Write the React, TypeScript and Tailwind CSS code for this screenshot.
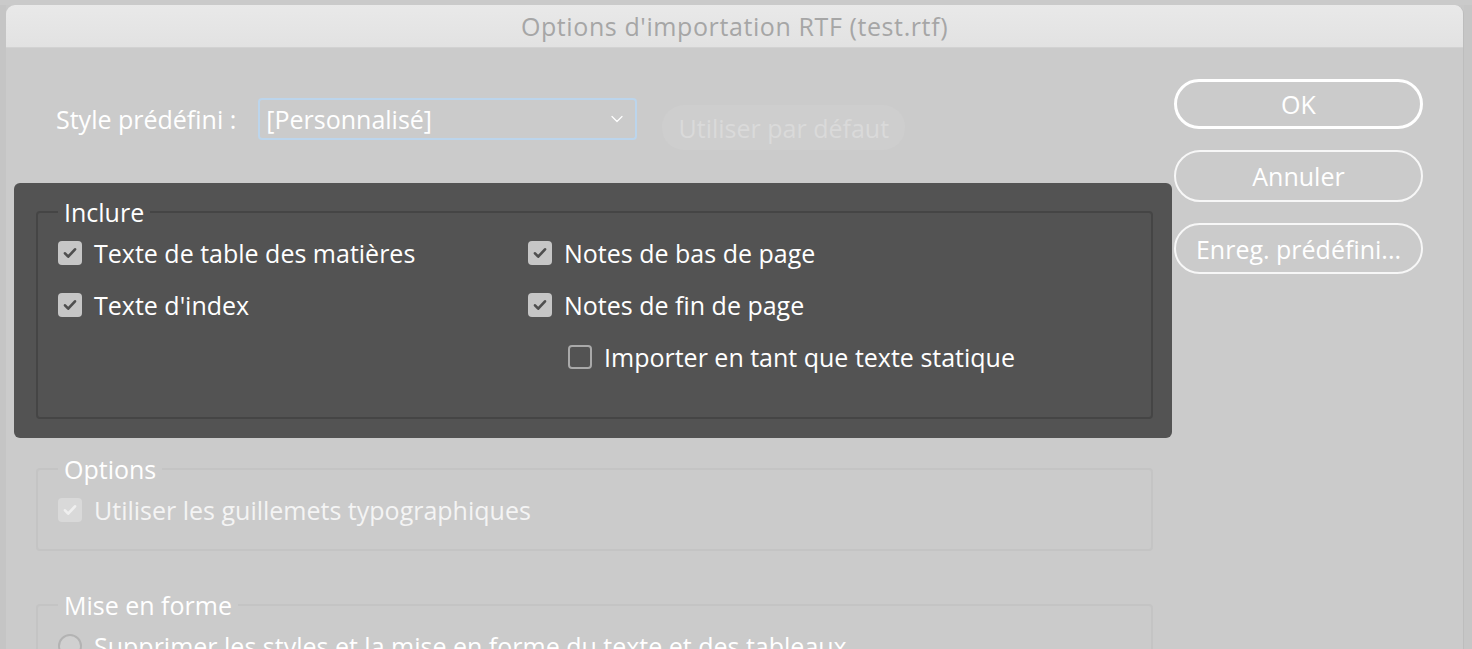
import { ChevronDown } from "lucide-react";

// Small check mark drawn for the mac-style checkboxes
function Tick({ color }: { color: string }) {
  return (
    <svg viewBox="0 0 24 24" className="w-[16px] h-[16px]">
      <path
        d="M4.5 12.5l4.8 5L19.5 6.5"
        fill="none"
        stroke={color}
        strokeWidth="4"
        strokeLinecap="round"
        strokeLinejoin="round"
      />
    </svg>
  );
}

function Check({
  label,
  checked = true,
  disabled = false,
}: {
  label: string;
  checked?: boolean;
  disabled?: boolean;
}) {
  return (
    <div className="flex items-center gap-[12px] h-[52px]">
      {checked ? (
        <div
          className={
            disabled
              ? "w-[24px] h-[24px] rounded-[4px] bg-[#d9d9d9] flex items-center justify-center"
              : "w-[24px] h-[24px] rounded-[4px] bg-[#c6c6c6] flex items-center justify-center"
          }
        >
          <Tick color={disabled ? "#efefef" : "#4f4f4f"} />
        </div>
      ) : (
        <div className="w-[24px] h-[24px] rounded-[4px] border-2 border-[#a9a9a9]" />
      )}
      <span className={disabled ? "text-[#f4f4f4] whitespace-nowrap" : "text-white whitespace-nowrap"}>
        {label}
      </span>
    </div>
  );
}

export default function App() {
  return (
    <div className="w-[1472px] h-[649px] overflow-hidden bg-[#c8c8c8] flex flex-col font-['Open_Sans',sans-serif] font-medium text-[25px] leading-[30px]">
      {/* window behind the dialog */}
      <div className="h-[5px] shrink-0 bg-[#cacaca]" />

      <div className="flex flex-1 min-h-0">
        <div className="w-[6px] bg-[#c5c5c5]" />

        {/* dialog */}
        <div className="w-[1458px] flex flex-col rounded-t-[9px] overflow-hidden border-r border-[#bdbdbd]">
          <div className="h-[43px] shrink-0 flex items-center justify-center bg-gradient-to-b from-[#e9e9e9] to-[#e2e2e2] border-b border-[#d2d2d2] text-[#a6a6a6] font-normal tracking-[0.6px]">
            Options d'importation RTF (test.rtf)
          </div>

          <div className="flex-1 bg-[#cbcbcb] flex pl-[30px]">
            {/* main column */}
            <div className="w-[1117px] flex flex-col">
              <div className="flex items-start pt-[50px] pl-[20px]">
                <span className="text-white h-[42px] flex items-center whitespace-nowrap">Style prédéfini :</span>
                <div className="ml-[22px] w-[379px] h-[42px] rounded-[4px] border-2 border-[#bcd5ec] flex items-center justify-between pl-[6px] pr-[8px] text-white">
                  <span>[Personnalisé]</span>
                  <ChevronDown className="w-[20px] h-[20px] text-white" strokeWidth={1.5} />
                </div>
                <div className="ml-[25px] mt-[7px] w-[243px] h-[45px] rounded-[22px] bg-[#cecece] flex items-center justify-center text-[#dadada] whitespace-nowrap">
                  Utiliser par défaut
                </div>
              </div>

              {/* highlighted section */}
              <div className="mt-[33px] -ml-[22px] -mr-[19px] pl-[22px] pr-[19px] pb-[19px] pt-[14px] rounded-[6px] bg-[#535353]">
                <fieldset className="border-2 border-[#454545] rounded-[4px] px-[20px] pb-[34px]">
                  <legend className="px-[6px] text-white">Inclure</legend>
                  <div className="flex">
                    <div className="w-[470px] flex flex-col">
                      <Check label="Texte de table des matières" />
                      <Check label="Texte d'index" />
                    </div>
                    <div className="flex flex-col">
                      <Check label="Notes de bas de page" />
                      <Check label="Notes de fin de page" />
                      <div className="pl-[40px]">
                        <Check label="Importer en tant que texte statique" checked={false} />
                      </div>
                    </div>
                  </div>
                </fieldset>
              </div>

              <fieldset className="mt-[16px] border-2 border-[#c4c4c4] rounded-[4px] px-[20px] pb-[13px]">
                <legend className="px-[6px] text-white">Options</legend>
                <Check label="Utiliser les guillemets typographiques" disabled />
              </fieldset>

              <fieldset className="mt-[39px] border-2 border-[#c4c4c4] rounded-[4px] px-[20px] pb-[13px]">
                <legend className="px-[6px] text-white">Mise en forme</legend>
                <div className="flex items-center gap-[12px] h-[52px]">
                  <div className="w-[24px] h-[24px] rounded-full border-2 border-[#b3b3b3] bg-[#d0d0d0]" />
                  <span className="text-white whitespace-nowrap">
                    Supprimer les styles et la mise en forme du texte et des tableaux
                  </span>
                </div>
              </fieldset>
            </div>

            {/* buttons */}
            <div className="ml-[21px] w-[249px] flex flex-col gap-[21px] pt-[31px]">
              <button className="h-[50px] rounded-full border-[3px] border-white text-white">OK</button>
              <button className="h-[52px] rounded-full border-2 border-[#f7f7f7] text-white">Annuler</button>
              <button className="h-[51px] rounded-full border-2 border-[#f7f7f7] text-white whitespace-nowrap">
                Enreg. prédéfini...
              </button>
            </div>
          </div>
        </div>

        <div className="flex-1 bg-[#c6c6c6]" />
      </div>
    </div>
  );
}
